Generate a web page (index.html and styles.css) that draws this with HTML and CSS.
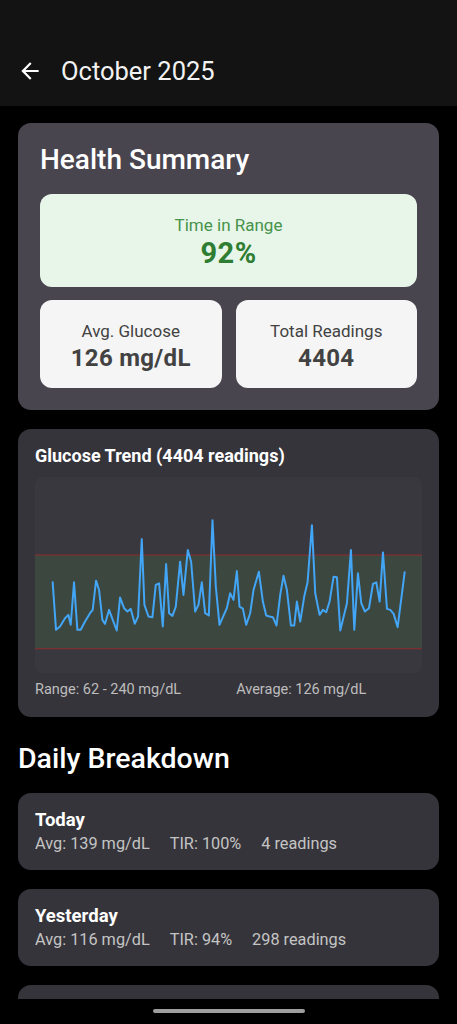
FILE: index.html
```html
<!DOCTYPE html>
<html>
<head>
<meta charset="utf-8">
<link rel="stylesheet" href="styles.css">
</head>
<body>
<div class="screen">
  <header class="appbar">
    <div class="toolbar">
      <svg class="back" viewBox="0 0 24 24" width="26" height="26"><path d="M20 11H7.83l5.59-5.59L12 4l-8 8 8 8 1.41-1.41L7.83 13H20v-2z" fill="#ffffff"/></svg>
      <h1 class="title">October 2025</h1>
    </div>
  </header>
  <main class="content">
    <section class="card summary">
      <h2 class="summary-title">Health Summary</h2>
      <div class="tir">
        <div class="tir-label">Time in Range</div>
        <div class="tir-value">92%</div>
      </div>
      <div class="stats">
        <div class="stat">
          <div class="stat-label">Avg. Glucose</div>
          <div class="stat-value">126 mg/dL</div>
        </div>
        <div class="stat">
          <div class="stat-label">Total Readings</div>
          <div class="stat-value">4404</div>
        </div>
      </div>
    </section>

    <section class="card trend">
      <h3 class="trend-title">Glucose Trend (4404 readings)</h3>
      <div class="chart">
        <svg viewBox="105 170 1160 590" preserveAspectRatio="none" width="100%" height="100%">
          <rect x="105" y="405" width="1160" height="282" fill="rgba(76,175,80,0.13)"/>
          <line x1="105" y1="405" x2="1265" y2="405" stroke="#8e2b2b" stroke-width="3"/>
          <line x1="105" y1="687" x2="1265" y2="687" stroke="#8e2b2b" stroke-width="3"/>
          <polyline fill="none" stroke="#42A5F5" stroke-width="6" stroke-linejoin="round" stroke-linecap="round" points="158,487 168,630 180,620 195,595 205,585 212,615 222,487 232,630 242,630 255,605 270,580 278,570 288,482 297,510 307,600 315,612 327,570 338,600 350,632 360,533 372,565 382,575 392,567 404,612 414,590 425,357 433,555 445,590 457,592 467,495 477,490 488,620 498,432 507,580 517,588 527,560 540,425 550,525 563,390 573,425 585,575 595,555 605,487 615,580 626,587 637,300 647,500 658,615 668,592 680,565 690,520 700,540 710,453 718,560 728,566 738,615 750,580 760,510 776,455 788,545 798,587 808,590 818,592 829,617 840,525 850,467 860,510 872,617 882,617 890,545 900,605 912,530 922,487 935,315 945,520 958,585 968,570 978,577 988,545 1000,470 1010,472 1020,632 1040,550 1052,390 1062,630 1073,460 1083,550 1094,575 1106,565 1118,492 1128,487 1138,545 1148,397 1160,567 1170,570 1180,582 1192,622 1213,457"/>
        </svg>
      </div>
      <div class="trend-footer">
        <span>Range: 62 - 240 mg/dL</span>
        <span>Average: 126 mg/dL</span>
      </div>
    </section>

    <h2 class="section-title">Daily Breakdown</h2>

    <section class="card day">
      <div class="day-name">Today</div>
      <div class="day-meta"><span>Avg: 139 mg/dL</span><span>TIR: 100%</span><span>4 readings</span></div>
    </section>
    <section class="card day">
      <div class="day-name">Yesterday</div>
      <div class="day-meta"><span>Avg: 116 mg/dL</span><span>TIR: 94%</span><span>298 readings</span></div>
    </section>
    <section class="card day day-peek"></section>
  </main>
  <nav class="navbar"><div class="pill"></div></nav>
</div>
</body>
</html>
```
FILE: styles.css
```css
* { box-sizing: border-box; }
html, body { margin: 0; padding: 0; background: #000; }
body { font-family: Roboto, "Noto Sans", sans-serif; color: #fff; }
h1, h2, h3 { margin: 0; }

.screen {
  width: 457px;
  height: 1024px;
  display: flex;
  flex-direction: column;
  overflow: hidden;
  background: #000;
}

.appbar {
  height: 106px;
  flex: none;
  background: #131313;
  padding-top: 36px;
}
.toolbar {
  height: 70px;
  display: flex;
  align-items: center;
  padding-left: 17px;
  gap: 18px;
}
.back { display: block; flex: none; }
.title {
  font-size: 25.5px;
  font-weight: 400;
  line-height: 30px;
  color: #f2f2f2;
}

.content {
  flex: 1;
  overflow: hidden;
  padding: 17px 18px 0;
  display: flex;
  flex-direction: column;
}

.card { border-radius: 13px; }

.summary {
  background: #49454f;
  padding: 21px 22px 22px;
  display: flex;
  flex-direction: column;
}
.summary-title {
  font-size: 28px;
  font-weight: 500;
  line-height: 32px;
  color: #fff;
  margin-bottom: 18px;
}
.tir {
  height: 93px;
  background: #e8f5e9;
  border-radius: 12px;
  display: flex;
  flex-direction: column;
  align-items: center;
  justify-content: center;
  padding-top: 2px;
}
.tir-label { font-size: 17px; line-height: 22px; color: #46934a; }
.tir-value { font-size: 29px; font-weight: 700; line-height: 34px; color: #2e7d32; letter-spacing: 0.5px; }

.stats {
  margin-top: 13px;
  display: grid;
  grid-template-columns: 1fr 1fr;
  gap: 14px;
}
.stat {
  height: 88px;
  background: #f5f5f5;
  border-radius: 12px;
  display: flex;
  flex-direction: column;
  align-items: center;
  justify-content: center;
  padding-top: 4px;
}
.stat-label { font-size: 17px; line-height: 24px; color: #424242; }
.stat-value { font-size: 24px; font-weight: 700; line-height: 30px; color: #424242; letter-spacing: 0.3px; }

.trend {
  margin-top: 19px;
  background: #36343b;
  padding: 15px 17px 18px;
}
.trend-title {
  font-size: 18px;
  font-weight: 700;
  line-height: 24px;
  color: #fff;
}
.chart {
  margin-top: 9px;
  height: 196px;
  border-radius: 8px;
  background: #3a383f;
  overflow: hidden;
}
.chart svg { display: block; }
.trend-footer {
  margin-top: 8px;
  display: flex;
  gap: 55px;
  font-size: 14.5px;
  line-height: 18px;
  color: #bdbdbd;
}

.section-title {
  margin-top: 26px;
  font-size: 28.5px;
  font-weight: 500;
  line-height: 32px;
  color: #fff;
}

.day {
  margin-top: 18px;
  background: #36343b;
  padding: 16px 17px;
  flex: none;
}
.day + .day { margin-top: 19px; }
.day-peek { height: 77px; }
.day-name {
  font-size: 18.5px;
  font-weight: 700;
  line-height: 22px;
  color: #fff;
}
.day-meta {
  margin-top: 3px;
  display: flex;
  gap: 20px;
  font-size: 16.3px;
  line-height: 20px;
  color: #c4c4c4;
}

.navbar {
  height: 25px;
  flex: none;
  background: #000;
  display: flex;
  justify-content: center;
  padding-top: 10px;
}
.pill {
  width: 152px;
  height: 4px;
  border-radius: 2px;
  background: #9e9e9e;
}
```
